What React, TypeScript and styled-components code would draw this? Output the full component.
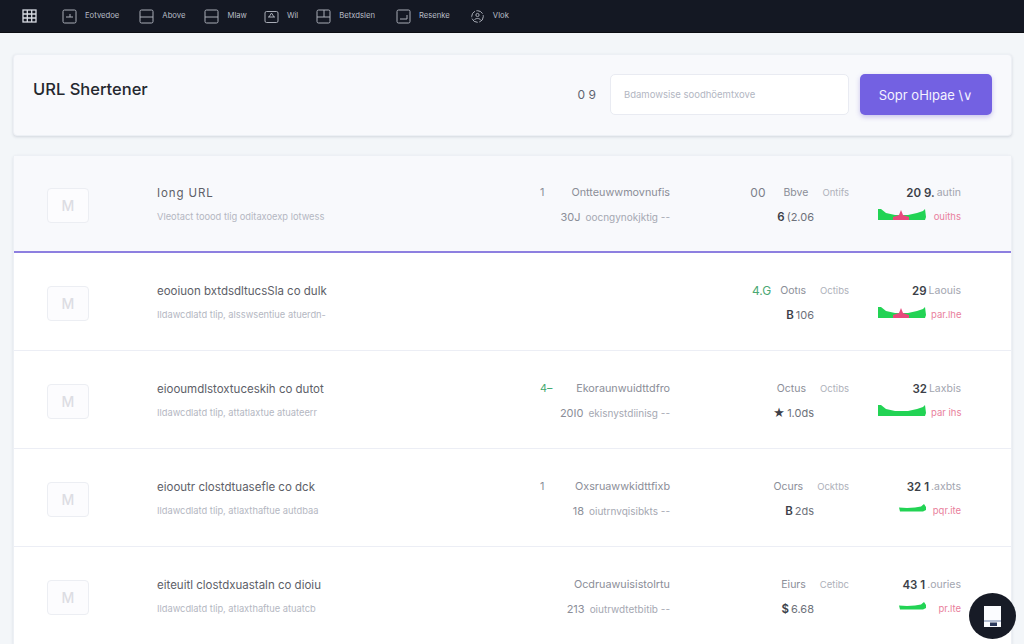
import React from 'react';
import styled, { createGlobalStyle } from 'styled-components';

const GlobalStyle = createGlobalStyle`
  html, body {
    margin: 0;
    padding: 0;
    background: #f3f6f9;
    font-family: 'Inter', 'Liberation Sans', sans-serif;
  }
`

const Page = styled.div`
  width: 1024px;
  height: 644px;
  overflow: hidden;
  position: relative;
`

const Nav = styled.nav`
  height: 33px;
  box-sizing: border-box;
  background: #141823;
  border-bottom: 1px solid #0b0d13;
  display: flex;
  align-items: center;
  padding-left: 22px;
`

const Logo = styled.svg`
  width: 15px;
  height: 14px;
  margin-right: 25px;
`

const NavItem = styled.div<{ $gap: number }>`
  display: flex;
  align-items: center;
  gap: 8px;
  margin-right: ${props => props.$gap}px;
  color: #b9bdc6;
  font-size: 7.7px;
  line-height: 1;
  white-space: nowrap;

  svg {
    width: 15px;
    height: 15px;
    flex: none;
  }
`

const Content = styled.main`
  padding: 21px 12px 0 13px;
  display: flex;
  flex-direction: column;
  gap: 19px;
`

const HeaderCard = styled.section`
  height: 82px;
  box-sizing: border-box;
  background: #f8f9fc;
  border: 1px solid #edf0f5;
  border-radius: 4px;
  box-shadow: 0 1px 3px rgba(40, 50, 80, .16);
  display: flex;
  align-items: center;
  padding: 0 19px 0 19px;
`

const Title = styled.h1`
  margin: 0 auto 12px 0;
  font-size: 16.5px;
  font-weight: 500;
  color: #25282f;
`

const Counter = styled.span`
  font-size: 12px;
  color: #5f6470;
  margin-right: 14px;
  margin-bottom: 1px;
`

const SearchBox = styled.div`
  width: 239px;
  height: 41px;
  box-sizing: border-box;
  background: #fff;
  border: 1px solid #e9ebf2;
  border-radius: 5px;
  display: flex;
  align-items: center;
  padding-left: 13px;
  font-size: 9.5px;
  color: #b2b6c2;
  margin-right: 11px;
  margin-bottom: 1px;
`

const PrimaryButton = styled.button`
  width: 132px;
  height: 41px;
  border: 0;
  border-radius: 5px;
  background: #7361e2;
  box-shadow: 0 2px 5px rgba(90, 70, 200, .3);
  color: #f4f2ff;
  font-family: inherit;
  font-size: 13px;
  margin-bottom: 1px;
  padding: 0;
`

const ListCard = styled.section`
  background: #fff;
  border: 1px solid #edf0f5;
  border-bottom: 0;
  border-radius: 4px 4px 0 0;
  box-shadow: 0 1px 3px rgba(40, 50, 80, .12);
`

const Row = styled.article<{ $active?: boolean; $height: number }>`
  height: ${props => props.$height}px;
  box-sizing: border-box;
  display: grid;
  grid-template-columns: 42px 451px 130px 180px 111px;
  padding: 0 0 0 33px;
  align-items: center;
  background: ${props => props.$active ? '#f8f9fc' : '#fff'};
  border-bottom: ${props => props.$active ? '2px solid #8d7fe0' : '1px solid #eceef5'};
`

const Thumb = styled.div`
  width: 42px;
  height: 35px;
  margin-top: 3px;
  box-sizing: border-box;
  border: 1px solid #eceef3;
  border-radius: 4px;
  background: #fcfcfe;
  display: flex;
  align-items: center;
  justify-content: center;
  font-size: 14px;
  font-weight: 500;
  color: #dcdde3;
`

const Cell = styled.div`
  display: flex;
  flex-direction: column;
  gap: 10px;
  padding-top: 2px;
`

const TextCell = styled(Cell)`
  padding-left: 68px;
`

const Line = styled.div`
  display: flex;
  align-items: center;
  height: 14px;
  white-space: nowrap;
  line-height: 14px;
`

const EndLine = styled(Line)`
  justify-content: flex-end;
`

const SpacedLine = styled(Line)`
  justify-content: space-between;
`

const RowTitle = styled.span<{ $wide?: boolean }>`
  font-size: 11.5px;
  letter-spacing: ${props => props.$wide ? '.9px' : '0'};
  color: #5d6068;
`

const RowSub = styled.span`
  font-size: 9.3px;
  color: #b4b7c2;
`

const Plain = styled.span<{ $tone?: string; $size?: number; $gap?: number }>`
  font-size: ${props => props.$size || 11}px;
  color: ${props => props.$tone || '#8b8e98'};
  margin-right: ${props => props.$gap || 0}px;
`

const Strong = styled.span`
  font-size: 11.5px;
  font-weight: 600;
  color: #3c3f48;
  margin-right: 2px;
`

const Mini = styled.svg<{ $width: number }>`
  width: ${props => props.$width}px;
  height: 12px;
  margin: 0 5px 6px 0;
`

const Trail = styled.span`
  width: 30px;
  flex: none;
  font-size: 9.5px;
  color: #e9809c;
  text-align: right;
`

const Fab = styled.button`
  position: absolute;
  left: 969px;
  top: 593px;
  width: 47px;
  height: 46px;
  padding: 0;
  border: 0;
  border-radius: 50%;
  background: #171b26;
  display: flex;
  align-items: center;
  justify-content: center;

  svg {
    width: 17px;
    height: 21px;
  }
`

const BoxIcon: React.FC<{ kind: number }> = ({ kind }) => (
  <svg viewBox="0 0 15 15" fill="none" stroke="#a9adb7" strokeWidth="1">
    {kind === 3 ? (
      <>
        <rect x="1" y="2.5" width="13" height="11" rx="1.5" />
        <path d="M4 8h7M5 8l2.5-4L10 8" />
      </>
    ) : kind === 6 ? (
      <>
        <circle cx="7.5" cy="7.5" r="5.8" strokeDasharray="7 1.5" />
        <circle cx="7.5" cy="6" r="1.6" />
        <path d="M4.5 11c.6-2 5.4-2 6 0" />
      </>
    ) : (
      <>
        <rect x="1" y="1" width="13" height="13" rx="1.5" />
        <path d={kind === 0 ? 'M4 8h7M8 8V5' : kind === 5 ? 'M4 10h7M11 10V6' : kind === 4 ? 'M1 8h13M8 8V1' : 'M1 8h13'} />
      </>
    )}
  </svg>
)

const navItems = [
  { label: 'Eotvedoe', kind: 0, gap: 20 },
  { label: 'Above', kind: 1, gap: 19 },
  { label: 'Mlaw', kind: 2, gap: 17 },
  { label: 'Wil', kind: 3, gap: 18 },
  { label: 'Betxdslen', kind: 4, gap: 21 },
  { label: 'Resenke', kind: 5, gap: 20 },
  { label: 'Vlok', kind: 6, gap: 0 },
]

const Sparkline: React.FC<{ short?: boolean; pink?: boolean }> = ({ short, pink }) => (
  short ? (
    <Mini $width={27} viewBox="0 0 27 12">
      <path d="M0 5.5l8 .5 8-.5 6-1 3-2.500 2 3v3l-3 1.500H1z" fill="#22d354" />
    </Mini>
  ) : (
    <Mini $width={48} viewBox="0 0 48 12">
      <path d="M0 1h3l5 4 9 2h13l9-2 6-2 2-2 1 8-1 3H0z" fill="#22d354" />
      {pink && <path d="M15 12V9l6-2 2-5 2 5 6 2v3z" fill="#e8487c" />}
    </Mini>
  )
)

const rows = [
  {
    title: 'Iong URL', sub: 'Vleotact toood tlig  oditaxoexp lotwess',
    mark: '1', markTone: '#8b8e98', top: 'Ontteuwwmovnufis', num: '30J', bottom: 'oocngynokjktig --',
    lead: '00', leadGap: 18, label: 'Bbve', sub2: 'Ontifs', glyph: '6', value: '(2.06',
    count: '20 9.', unit: 'autin', pink: true, short: false, trail: 'ouiths',
  },
  {
    title: 'eooiuon bxtdsdltucsSla co dulk', sub: 'Ildawcdlatd tlip,  alsswsentiue atuerdn-',
    mark: '', markTone: '', top: '', num: '', bottom: '',
    lead: '4.G', leadGap: 9, label: 'Ootıs', sub2: 'Octibs', glyph: 'B', value: '106',
    count: '29', unit: 'Laouis', pink: true, short: false, trail: 'par.lhe',
  },
  {
    title: 'eiooumdlstoxtuceskih co dutot', sub: 'Ildawcdlatd tlip,  attatlaxtue atuateerr',
    mark: '4–', markTone: '#3fa86d', top: 'Ekoraunwuidttdfro', num: '20I0', bottom: 'ekisnystdiinisg --',
    lead: '', leadGap: 0, label: 'Octus', sub2: 'Octibs', glyph: '★', value: '1.0ds',
    count: '32', unit: 'Laxbis', pink: false, short: false, trail: 'par ihs',
  },
  {
    title: 'eiooutr clostdtuasefle co dck', sub: 'Ildawcdlatd tlip,  atlaxthaftue autdbaa',
    mark: '1', markTone: '#8b8e98', top: 'Oxsruawwkidttfixb', num: '18', bottom: 'oiutrnvqisibkts --',
    lead: '', leadGap: 0, label: 'Ocurs', sub2: 'Ocktbs', glyph: 'B', value: '2ds',
    count: '32 1', unit: '.axbts', pink: false, short: true, trail: 'pqr.ite',
  },
  {
    title: 'eiteuitl clostdxuastaln co dioiu', sub: 'Ildawcdlatd tlip,  atlaxthaftue atuatcb',
    mark: '', markTone: '', top: 'Ocdruawuisistolrtu', num: '213', bottom: 'oiutrwdtetbitib --',
    lead: '', leadGap: 0, label: 'Eiurs', sub2: 'Cetibc', glyph: '$', value: '6.68',
    count: '43 1', unit: '.ouries', pink: false, short: true, trail: 'pr.lte',
  },
]

export default function App() {
  return (
    <Page>
      <GlobalStyle />
      <Nav>
        <Logo viewBox="0 0 15 14" fill="none" stroke="#d8dbe2" strokeWidth="1.3">
          <rect x="1" y="1" width="13" height="12" />
          <path d="M1 5h13M1 9h13M5.300 1v12M9.700 1v12" />
        </Logo>
        {navItems.map(item => (
          <NavItem key={item.label} $gap={item.gap}>
            <BoxIcon kind={item.kind} />
            {item.label}
          </NavItem>
        ))}
      </Nav>
      <Content>
        <HeaderCard>
          <Title>URL Shertener</Title>
          <Counter>0 9</Counter>
          <SearchBox>Bdamowsise soodhöemtxove</SearchBox>
          <PrimaryButton>Sopr oHıpae \∨</PrimaryButton>
        </HeaderCard>
        <ListCard>
          {rows.map((row, i) => (
            <Row key={row.title} $active={i === 0} $height={i === 0 ? 97 : 98}>
              <Thumb>M</Thumb>
              <TextCell>
                <Line><RowTitle $wide={i === 0}>{row.title}</RowTitle></Line>
                <Line><RowSub>{row.sub}</RowSub></Line>
              </TextCell>
              <Cell>
                <SpacedLine>
                  <Plain $size={10.8} $tone={row.markTone}>{row.mark}</Plain>
                  <Plain $size={10.8}>{row.top}</Plain>
                </SpacedLine>
                <EndLine>
                  <Plain $gap={5}>{row.num}</Plain>
                  <Plain $size={10} $tone="#a5a8b2">{row.bottom}</Plain>
                </EndLine>
              </Cell>
              <Cell>
                <EndLine>
                  <Plain $tone={row.lead === '4.G' ? '#4aa873' : '#7d808a'} $size={12} $gap={row.leadGap}>{row.lead}</Plain>
                  <Plain $size={10.5} $gap={14}>{row.label}</Plain>
                  <Plain $size={9.5} $tone="#aeb1ba" $gap={1}>{row.sub2}</Plain>
                </EndLine>
                <EndLine>
                  <Strong>{row.glyph}</Strong>
                  <Plain $gap={36} $tone="#6e717a"> {row.value}</Plain>
                </EndLine>
              </Cell>
              <Cell>
                <EndLine>
                  <Strong>{row.count}</Strong>
                  <Plain $size={10.5} $tone="#a2a5af">{row.unit}</Plain>
                </EndLine>
                <EndLine>
                  <Sparkline short={row.short} pink={row.pink} />
                  <Trail>{row.trail}</Trail>
                </EndLine>
              </Cell>
            </Row>
          ))}
        </ListCard>
      </Content>
      <Fab aria-label="Help">
        <svg viewBox="0 0 17 21">
          <rect width="17" height="21" fill="#fbfcff" />
          <rect y="14.500" width="17" height="1" fill="#6d7fa3" />
          <rect x="6" y="16.500" width="7" height="3.500" fill="#2c3a5c" />
        </svg>
      </Fab>
    </Page>
  );
}
